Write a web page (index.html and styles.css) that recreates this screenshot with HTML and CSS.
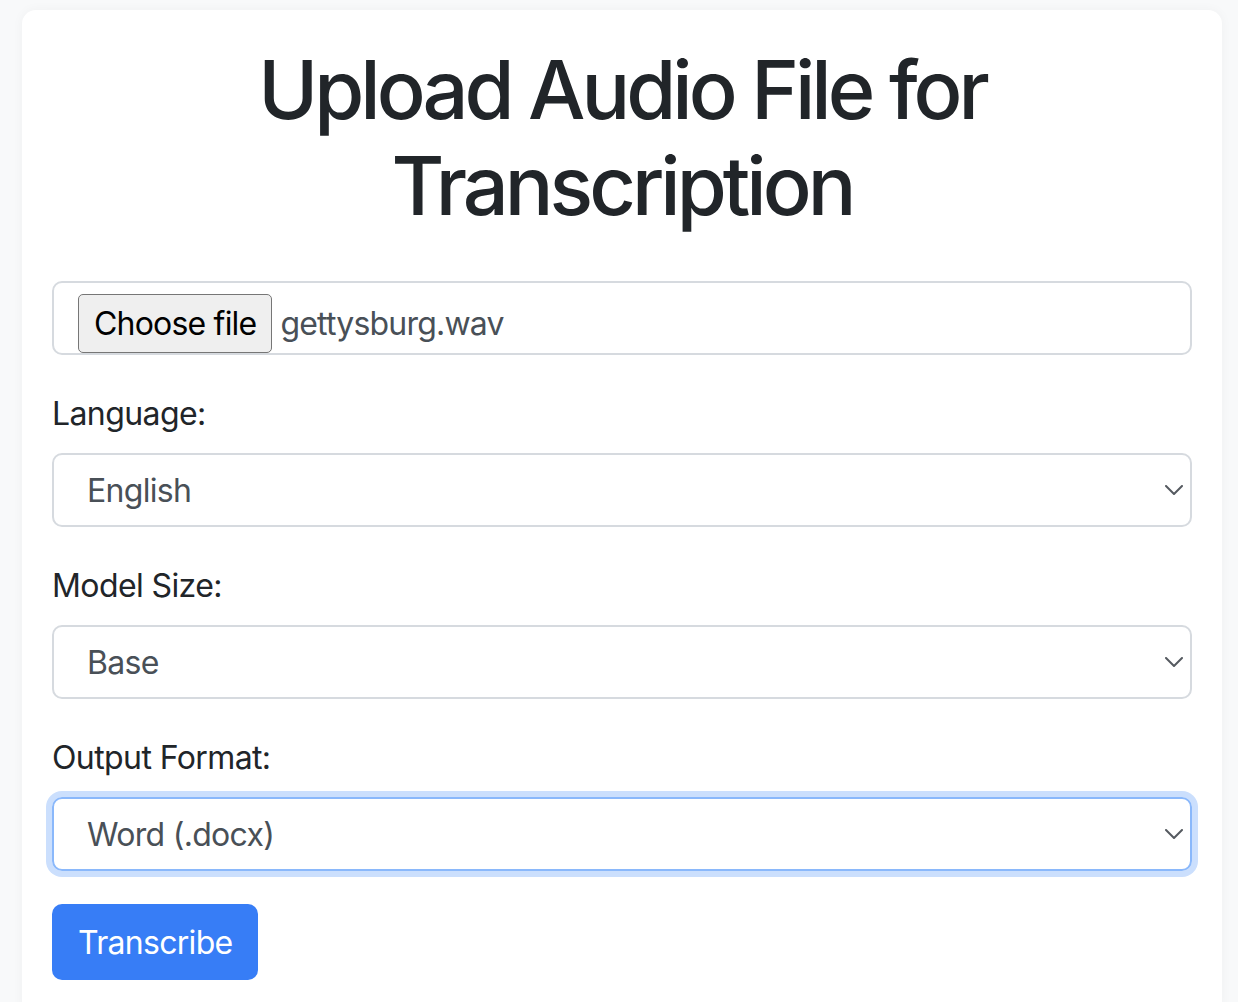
FILE: index.html
```html
<!DOCTYPE html>
<html lang="en">
<head>
<meta charset="utf-8">
<title>Upload Audio File for Transcription</title>
<link rel="stylesheet" href="styles.css">
</head>
<body>
<main class="card">
  <h1 class="title">Upload Audio File for Transcription</h1>
  <form class="form">
    <div class="field">
      <div class="file-input">
        <span class="file-btn">Choose file</span>
        <span class="file-name">gettysburg.wav</span>
      </div>
    </div>
    <div class="field">
      <label class="label">Language:</label>
      <div class="select">
        <span class="select-value">English</span>
        <svg class="chevron" width="18" height="10" viewBox="0 0 18 10"><polyline points="1,1 9,9 17,1" fill="none" stroke="#555a60" stroke-width="2" stroke-linecap="round" stroke-linejoin="round"/></svg>
      </div>
    </div>
    <div class="field">
      <label class="label">Model Size:</label>
      <div class="select">
        <span class="select-value">Base</span>
        <svg class="chevron" width="18" height="10" viewBox="0 0 18 10"><polyline points="1,1 9,9 17,1" fill="none" stroke="#555a60" stroke-width="2" stroke-linecap="round" stroke-linejoin="round"/></svg>
      </div>
    </div>
    <div class="field">
      <label class="label">Output Format:</label>
      <div class="select select-focus">
        <span class="select-value">Word (.docx)</span>
        <svg class="chevron" width="18" height="10" viewBox="0 0 18 10"><polyline points="1,1 9,9 17,1" fill="none" stroke="#555a60" stroke-width="2" stroke-linecap="round" stroke-linejoin="round"/></svg>
      </div>
    </div>
    <button type="button" class="btn">Transcribe</button>
  </form>
</main>
</body>
</html>
```

FILE: styles.css
```css
* { box-sizing: border-box; }

html, body {
  margin: 0;
  background: #f8f9fa;
}

body {
  padding: 10px 0 0 22px;
  font-family: "Inter", "Liberation Sans", sans-serif;
  color: #212529;
  overflow: hidden;
  height: 1002px;
}

.card {
  width: 1200px;
  background: #ffffff;
  border-radius: 14px;
  padding: 30px 30px 40px;
  box-shadow: 0 0 12px rgba(0, 0, 0, 0.04);
}

.title {
  margin: 0 0 47px;
  padding-top: 2px;
  text-align: center;
  font-size: 81px;
  line-height: 96px;
  font-weight: 500;
  letter-spacing: -4px;
  color: #212529;
}

.form {
  display: flex;
  flex-direction: column;
}

.field {
  margin-bottom: 32px;
}

.field:nth-last-child(2) {
  margin-bottom: 33px;
}

.label {
  display: block;
  font-size: 32px;
  line-height: 48px;
  padding-top: 3px;
  margin-bottom: 15px;
  letter-spacing: -0.6px;
  color: #212529;
}

.file-input {
  height: 74px;
  border: 2px solid #d6dadf;
  border-radius: 10px;
  padding: 11px 24px 0;
  display: flex;
  align-items: center;
}

.file-btn {
  height: 59px;
  display: flex;
  align-items: center;
  padding: 0 15px;
  background: #efefef;
  border: 1.5px solid #767676;
  border-radius: 5px;
  font-size: 32px;
  letter-spacing: -0.8px;
  color: #000000;
}

.file-name {
  margin-left: 8px;
  font-size: 32px;
  letter-spacing: -0.8px;
  color: #495057;
}

.select {
  height: 74px;
  border: 2px solid #d6dadf;
  border-radius: 10px;
  padding: 0 7px 0 33px;
  display: flex;
  align-items: center;
  justify-content: space-between;
}

.select-value {
  font-size: 32px;
  letter-spacing: -0.7px;
  color: #495057;
}

.chevron {
  display: block;
  margin-top: -1px;
}

.select-focus {
  border-color: #8ab8fb;
  box-shadow: 0 0 0 6px #cbdffd;
}

.btn {
  align-self: flex-start;
  height: 76px;
  padding: 0 25px 0 26px;
  border: none;
  border-radius: 10px;
  background: #377df6;
  color: #ffffff;
  font-family: "Inter", "Liberation Sans", sans-serif;
  font-size: 32px;
  font-weight: 400;
  letter-spacing: -0.7px;
}
```
